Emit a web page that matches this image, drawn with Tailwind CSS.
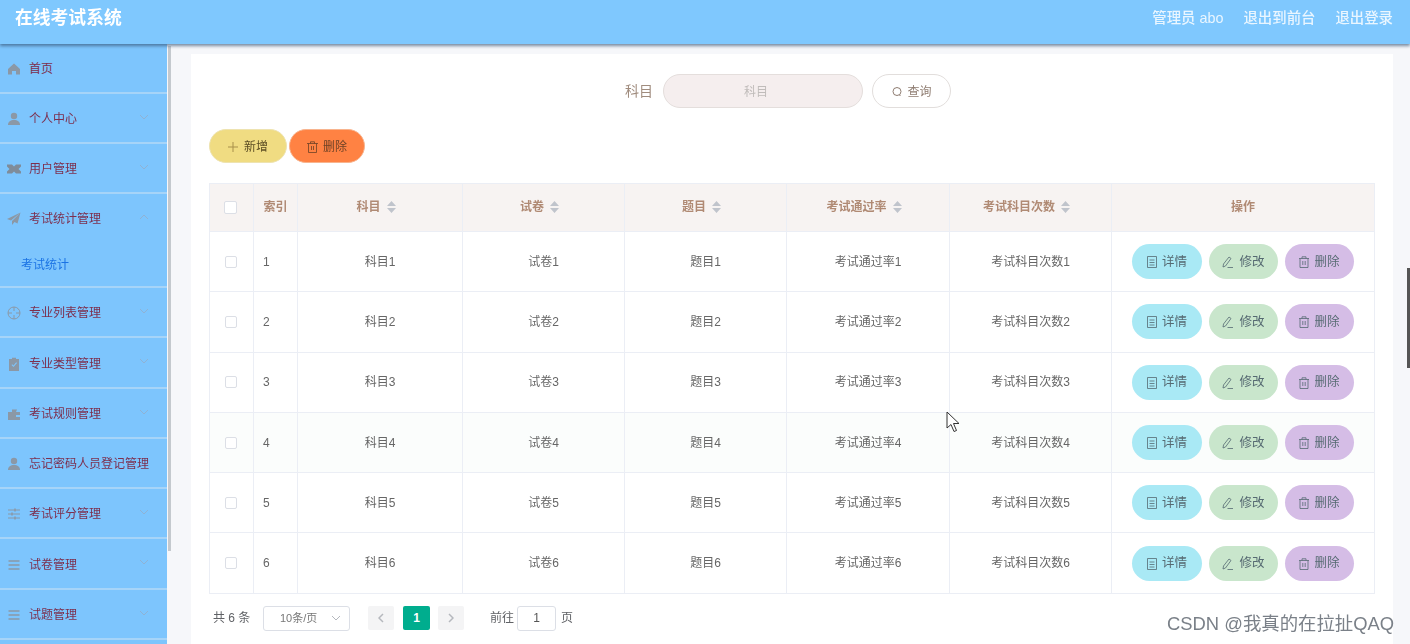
<!DOCTYPE html>
<html lang="zh"><head><meta charset="utf-8"><title>在线考试系统</title>
<script src="https://cdn.jsdelivr.net/npm/@tailwindcss/browser@4"></script></head>
<body class="m-0 overflow-hidden bg-[#f6f7fa]">
<div class="relative w-[1410px] h-[644px] overflow-hidden font-['Liberation_Sans','Noto_Sans_CJK_SC',sans-serif] blur-[0.35px]">
<header class="relative z-10 h-[44px] bg-[#7fc8fe] flex items-center justify-between pl-[15px] pr-[17px] shadow-[0_2px_3px_rgba(50,80,110,0.65)]">
  <h1 class="text-[17.8px] font-bold text-white leading-none -mt-[6px]">在线考试系统</h1>
  <div class="flex gap-[20px] text-[14.4px] text-[#eaf6ff] font-medium -mt-[6px]"><span>管理员 abo</span><span>退出到前台</span><span>退出登录</span></div>
</header>
<div class="flex h-[600px]">
  <aside class="w-[167px] shrink-0 bg-[#7dc5fd] text-[12px] text-[#7c2f4e]">
    <div class="h-[50px] flex items-center pl-[7px] gap-[8px] border-b-2 border-[#a6d4f8] pt-[1px]">
      <svg class="w-[14px] h-[14px] text-[#8b98a6]" viewBox="0 0 14 14" fill="currentColor"><path d="M7 1.5 1 7v5.5h4V9h4v3.5h4V7z"/></svg><span>首页</span></div>
    <div class="h-[50px] flex items-center pl-[7px] gap-[8px] border-b-2 border-[#a6d4f8] pt-[2px] relative">
      <svg class="w-[14px] h-[14px] text-[#8b98a6]" viewBox="0 0 14 14" fill="currentColor"><circle cx="7" cy="4" r="3.2"/><path d="M1 13c0-3.500 2.500-5 6-5s6 1.500 6 5z"/></svg><span>个人中心</span>
      <svg class="absolute right-[18px] top-[20px] w-[10px] h-[6px] text-[#8fb2d4]" viewBox="0 0 10 6" fill="none" stroke="currentColor"><path d="M1 1l4 4 4-4"/></svg></div>
    <div class="h-[50px] flex items-center pl-[7px] gap-[8px] border-b-2 border-[#a6d4f8] pt-[2px] relative">
      <svg class="w-[14px] h-[14px] text-[#7f8c9a]" viewBox="0 0 14 14" fill="currentColor"><path d="M0 2.500h5l2 2 2-2h5v2l-2.500 2.500L14 9.500v2H9l-2-2-2 2H0v-2L2.500 7 0 4.500z"/></svg><span>用户管理</span>
      <svg class="absolute right-[18px] top-[20px] w-[10px] h-[6px] text-[#8fb2d4]" viewBox="0 0 10 6" fill="none" stroke="currentColor"><path d="M1 1l4 4 4-4"/></svg></div>
    <div class="h-[94px] border-b-2 border-[#a6d4f8] relative">
      <div class="h-[50px] flex items-center pl-[7px] gap-[8px]">
      <svg class="w-[14px] h-[14px] text-[#8b98a6]" viewBox="0 0 14 14" fill="currentColor"><path d="M13.500.5 0 7l4 1.500zM13.500.5 5 9v4l2.500-3 3 1.500z"/></svg><span>考试统计管理</span></div>
      <svg class="absolute right-[18px] top-[20px] w-[10px] h-[6px] text-[#8fb2d4]" viewBox="0 0 10 6" fill="none" stroke="currentColor"><path d="M1 5l4-4 4 4"/></svg>
      <div class="pl-[21px] text-[#1a73e4] mt-[12px] leading-[18px]">考试统计</div></div>
    <div class="h-[50px] flex items-center pl-[7px] gap-[8px] border-b-2 border-[#a6d4f8] pt-[2px] relative">
      <svg class="w-[14px] h-[14px] text-[#8b98a6]" viewBox="0 0 14 14" fill="none" stroke="currentColor"><circle cx="7" cy="7" r="6"/><path d="M7 1v4M7 9v4M1 7h4M9 7h4"/></svg><span>专业列表管理</span>
      <svg class="absolute right-[18px] top-[20px] w-[10px] h-[6px] text-[#8fb2d4]" viewBox="0 0 10 6" fill="none" stroke="currentColor"><path d="M1 1l4 4 4-4"/></svg></div>
    <div class="h-[51px] flex items-center pl-[7px] gap-[8px] border-b-2 border-[#a6d4f8] pt-[2px] relative">
      <svg class="w-[14px] h-[14px] text-[#8b98a6]" viewBox="0 0 14 14" fill="currentColor"><path d="M2 2h3V.8h4V2h3v12H2zm2.500 6 2 2 3.500-4-.8-.7L6.500 8.600 5.200 7.300z"/></svg><span>专业类型管理</span>
      <svg class="absolute right-[18px] top-[20px] w-[10px] h-[6px] text-[#8fb2d4]" viewBox="0 0 10 6" fill="none" stroke="currentColor"><path d="M1 1l4 4 4-4"/></svg></div>
    <div class="h-[50px] flex items-center pl-[7px] gap-[8px] border-b-2 border-[#a6d4f8] pt-[2px] relative">
      <svg class="w-[14px] h-[14px] text-[#8b98a6]" viewBox="0 0 14 14" fill="currentColor"><path d="M1 5h4V2.500h5L9 5h4v8H1zm8 3v2h4V8z"/></svg><span>考试规则管理</span>
      <svg class="absolute right-[18px] top-[20px] w-[10px] h-[6px] text-[#8fb2d4]" viewBox="0 0 10 6" fill="none" stroke="currentColor"><path d="M1 1l4 4 4-4"/></svg></div>
    <div class="h-[50px] flex items-center pl-[7px] gap-[8px] border-b-2 border-[#a6d4f8] pt-[2px]">
      <svg class="w-[14px] h-[14px] text-[#8b98a6]" viewBox="0 0 14 14" fill="currentColor"><circle cx="7" cy="4" r="3.200"/><path d="M1 13c0-3.500 2.500-5 6-5s6 1.500 6 5z"/></svg><span class="whitespace-nowrap">忘记密码人员登记管理</span></div>
    <div class="h-[50px] flex items-center pl-[7px] gap-[8px] border-b-2 border-[#a6d4f8] pt-[2px] relative">
      <svg class="w-[14px] h-[14px] text-[#8b98a6]" viewBox="0 0 14 14" fill="none" stroke="currentColor"><path d="M1 3h12M1 7h12M1 11h12"/><path d="M8 1.500v3M5 5.500v3M8 9.500v3" stroke-width="1.500"/></svg><span>考试评分管理</span>
      <svg class="absolute right-[18px] top-[20px] w-[10px] h-[6px] text-[#8fb2d4]" viewBox="0 0 10 6" fill="none" stroke="currentColor"><path d="M1 1l4 4 4-4"/></svg></div>
    <div class="h-[51px] flex items-center pl-[7px] gap-[8px] border-b-2 border-[#a6d4f8] pt-[2px] relative">
      <svg class="w-[14px] h-[14px] text-[#8b98a6]" viewBox="0 0 14 14" fill="none" stroke="currentColor" stroke-width="1.500"><path d="M1.500 3h11M1.500 7h11M1.500 11h11"/></svg><span>试卷管理</span>
      <svg class="absolute right-[18px] top-[20px] w-[10px] h-[6px] text-[#8fb2d4]" viewBox="0 0 10 6" fill="none" stroke="currentColor"><path d="M1 1l4 4 4-4"/></svg></div>
    <div class="h-[50px] flex items-center pl-[7px] gap-[8px] border-b-2 border-[#a6d4f8] pt-[2px] relative">
      <svg class="w-[14px] h-[14px] text-[#8b98a6]" viewBox="0 0 14 14" fill="none" stroke="currentColor" stroke-width="1.500"><path d="M1.500 3h11M1.500 7h11M1.500 11h11"/></svg><span>试题管理</span>
      <svg class="absolute right-[18px] top-[20px] w-[10px] h-[6px] text-[#8fb2d4]" viewBox="0 0 10 6" fill="none" stroke="currentColor"><path d="M1 1l4 4 4-4"/></svg></div>
  </aside>
  <main class="flex-1 pl-[24px] pr-[17px] pt-[10px]">
    <div class="w-[1202px] h-[600px] bg-white px-[18px] pt-[20px] text-[12px]">
      <form class="h-[34px] flex items-center justify-center gap-[10px] pr-[8px]">
        <label class="text-[14px] text-[#a08c7e]">科目</label>
        <div class="w-[200px] h-[34px] pr-[14px] pt-[1px] rounded-full bg-[#f5eeee] border border-[#e4dedc] flex items-center justify-center text-[#c0bcba]">科目</div>
        <div class="-ml-[1px] w-[79px] h-[34px] pt-[1px] rounded-full bg-white border border-[#e2dedc] flex items-center justify-center gap-[4px] text-[#8f7d72]">
          <svg class="w-[12px] h-[12px]" viewBox="0 0 12 12" fill="none" stroke="currentColor"><circle cx="6" cy="5.500" r="4"/><path d="M8.500 9l1 1"/></svg>查询</div>
      </form>
      <div class="flex gap-[2px] mt-[21px] h-[34px]">
        <div class="w-[78px] pt-[1px] rounded-full bg-[#f0dc82] border border-[#eee3b0] flex items-center justify-center gap-[6px] text-[#5c4e24]">
          <svg class="w-[10px] h-[10px] text-[#a8904a]" viewBox="0 0 10 10" fill="none" stroke="currentColor"><path d="M5 0v10M0 5h10"/></svg>新增</div>
        <div class="w-[76px] pt-[1px] rounded-full bg-[#ff8243] border border-[#f8b48e] flex items-center justify-center gap-[5px] text-[#6e4226]">
          <svg class="w-[11px] h-[12px]" viewBox="0 0 11 12" fill="none" stroke="currentColor" stroke-width="0.800"><path d="M0 2.500h11M3.500 2.500V.8h4v1.700M1.500 2.500v9h8v-9M4.500 5v4M6.500 5v4"/></svg>删除</div>
      </div>
      <table class="mt-[20px] w-[1165px] table-fixed border-collapse text-[12px] text-[#666] border border-[#ebeef5]">
        <colgroup><col class="w-[44px]"><col class="w-[44px]"><col class="w-[165px]"><col class="w-[162px]"><col class="w-[162px]"><col class="w-[163px]"><col class="w-[162px]"><col class="w-[263px]"></colgroup>
        <thead><tr class="h-[48px] bg-[#f7f3f2] text-[#b08a74] font-bold">
          <th class="border border-[#ebeef5] pr-[2px]"><span class="block w-[13px] h-[13px] mx-auto bg-white border border-[#dcdfe6] rounded-[2px]"></span></th>
          <th class="border border-[#ebeef5] font-bold pb-[2px]">索引</th>
          <th class="border border-[#ebeef5] font-bold pr-[8px] pb-[2px]"><span class="inline-flex items-center gap-[6px]">科目<svg class="w-[9px] h-[12px] text-[#c0c4cc]" viewBox="0 0 9 12" fill="currentColor"><path d="M4.500 0 9 5H0zM0 7h9l-4.500 5z"/></svg></span></th>
          <th class="border border-[#ebeef5] font-bold pr-[8px] pb-[2px]"><span class="inline-flex items-center gap-[6px]">试卷<svg class="w-[9px] h-[12px] text-[#c0c4cc]" viewBox="0 0 9 12" fill="currentColor"><path d="M4.500 0 9 5H0zM0 7h9l-4.500 5z"/></svg></span></th>
          <th class="border border-[#ebeef5] font-bold pr-[8px] pb-[2px]"><span class="inline-flex items-center gap-[6px]">题目<svg class="w-[9px] h-[12px] text-[#c0c4cc]" viewBox="0 0 9 12" fill="currentColor"><path d="M4.500 0 9 5H0zM0 7h9l-4.500 5z"/></svg></span></th>
          <th class="border border-[#ebeef5] font-bold pr-[8px] pb-[2px]"><span class="inline-flex items-center gap-[6px]">考试通过率<svg class="w-[9px] h-[12px] text-[#c0c4cc]" viewBox="0 0 9 12" fill="currentColor"><path d="M4.500 0 9 5H0zM0 7h9l-4.500 5z"/></svg></span></th>
          <th class="border border-[#ebeef5] font-bold pr-[8px] pb-[2px]"><span class="inline-flex items-center gap-[6px]">考试科目次数<svg class="w-[9px] h-[12px] text-[#c0c4cc]" viewBox="0 0 9 12" fill="currentColor"><path d="M4.500 0 9 5H0zM0 7h9l-4.500 5z"/></svg></span></th>
          <th class="border border-[#ebeef5] font-bold pb-[2px]">操作</th>
        </tr></thead>
        <tbody class="text-center">
          <tr class="h-[60.3px]"><td class="border border-[#ebeef5] pr-[2px]"><span class="block w-[12px] h-[12px] mx-auto bg-white border border-[#dcdfe6] rounded-[2px]"></span></td><td class="border border-[#ebeef5] text-left pl-[9px]">1</td><td class="border border-[#ebeef5]">科目1</td><td class="border border-[#ebeef5]">试卷1</td><td class="border border-[#ebeef5]">题目1</td><td class="border border-[#ebeef5]">考试通过率1</td><td class="border border-[#ebeef5]">考试科目次数1</td>
            <td class="border border-[#ebeef5]"><div class="flex justify-center gap-[7px] text-[12.5px] text-[#566a72]"><span class="w-[70px] h-[35px] pt-[1px] rounded-full bg-[#a9e9f5] flex items-center justify-center gap-[5px]"><svg class="w-[10px] h-[12px]" viewBox="0 0 10 12" fill="none" stroke="currentColor" stroke-width="0.800"><path d="M.5.500h9v11h-9zM2.500 4h5M2.500 6.500h5M2.500 9h5"/></svg>详情</span><span class="w-[69px] h-[35px] pt-[1px] rounded-full bg-[#c9e6cc] flex items-center justify-center gap-[5px]"><svg class="w-[12px] h-[12px]" viewBox="0 0 12 12" fill="none" stroke="currentColor" stroke-width="0.800"><path d="M1.500 8 7 1l2 1.500L3.500 10l-2.500 1zM5.500 11.500H11"/></svg>修改</span><span class="w-[69px] h-[35px] pt-[1px] rounded-full bg-[#d5bde6] flex items-center justify-center gap-[5px]"><svg class="w-[10px] h-[12px]" viewBox="0 0 10 12" fill="none" stroke="currentColor" stroke-width="0.800"><path d="M0 2.500h10M3 2.500V.8h4v1.700M1 2.500v9h8v-9M3.800 5v4M6.200 5v4"/></svg>删除</span></div></td></tr>
          <tr class="h-[60.3px]"><td class="border border-[#ebeef5] pr-[2px]"><span class="block w-[12px] h-[12px] mx-auto bg-white border border-[#dcdfe6] rounded-[2px]"></span></td><td class="border border-[#ebeef5] text-left pl-[9px]">2</td><td class="border border-[#ebeef5]">科目2</td><td class="border border-[#ebeef5]">试卷2</td><td class="border border-[#ebeef5]">题目2</td><td class="border border-[#ebeef5]">考试通过率2</td><td class="border border-[#ebeef5]">考试科目次数2</td>
            <td class="border border-[#ebeef5]"><div class="flex justify-center gap-[7px] text-[12.5px] text-[#566a72]"><span class="w-[70px] h-[35px] pt-[1px] rounded-full bg-[#a9e9f5] flex items-center justify-center gap-[5px]"><svg class="w-[10px] h-[12px]" viewBox="0 0 10 12" fill="none" stroke="currentColor" stroke-width="0.800"><path d="M.5.500h9v11h-9zM2.500 4h5M2.500 6.500h5M2.500 9h5"/></svg>详情</span><span class="w-[69px] h-[35px] pt-[1px] rounded-full bg-[#c9e6cc] flex items-center justify-center gap-[5px]"><svg class="w-[12px] h-[12px]" viewBox="0 0 12 12" fill="none" stroke="currentColor" stroke-width="0.800"><path d="M1.500 8 7 1l2 1.500L3.500 10l-2.500 1zM5.500 11.500H11"/></svg>修改</span><span class="w-[69px] h-[35px] pt-[1px] rounded-full bg-[#d5bde6] flex items-center justify-center gap-[5px]"><svg class="w-[10px] h-[12px]" viewBox="0 0 10 12" fill="none" stroke="currentColor" stroke-width="0.800"><path d="M0 2.500h10M3 2.500V.8h4v1.700M1 2.500v9h8v-9M3.800 5v4M6.200 5v4"/></svg>删除</span></div></td></tr>
          <tr class="h-[60.3px]"><td class="border border-[#ebeef5] pr-[2px]"><span class="block w-[12px] h-[12px] mx-auto bg-white border border-[#dcdfe6] rounded-[2px]"></span></td><td class="border border-[#ebeef5] text-left pl-[9px]">3</td><td class="border border-[#ebeef5]">科目3</td><td class="border border-[#ebeef5]">试卷3</td><td class="border border-[#ebeef5]">题目3</td><td class="border border-[#ebeef5]">考试通过率3</td><td class="border border-[#ebeef5]">考试科目次数3</td>
            <td class="border border-[#ebeef5]"><div class="flex justify-center gap-[7px] text-[12.5px] text-[#566a72]"><span class="w-[70px] h-[35px] pt-[1px] rounded-full bg-[#a9e9f5] flex items-center justify-center gap-[5px]"><svg class="w-[10px] h-[12px]" viewBox="0 0 10 12" fill="none" stroke="currentColor" stroke-width="0.800"><path d="M.5.500h9v11h-9zM2.500 4h5M2.500 6.500h5M2.500 9h5"/></svg>详情</span><span class="w-[69px] h-[35px] pt-[1px] rounded-full bg-[#c9e6cc] flex items-center justify-center gap-[5px]"><svg class="w-[12px] h-[12px]" viewBox="0 0 12 12" fill="none" stroke="currentColor" stroke-width="0.800"><path d="M1.500 8 7 1l2 1.500L3.500 10l-2.500 1zM5.500 11.500H11"/></svg>修改</span><span class="w-[69px] h-[35px] pt-[1px] rounded-full bg-[#d5bde6] flex items-center justify-center gap-[5px]"><svg class="w-[10px] h-[12px]" viewBox="0 0 10 12" fill="none" stroke="currentColor" stroke-width="0.800"><path d="M0 2.500h10M3 2.500V.8h4v1.700M1 2.500v9h8v-9M3.800 5v4M6.200 5v4"/></svg>删除</span></div></td></tr>
          <tr class="h-[60.3px] bg-[#fbfdfc]"><td class="border border-[#ebeef5] pr-[2px]"><span class="block w-[12px] h-[12px] mx-auto bg-white border border-[#dcdfe6] rounded-[2px]"></span></td><td class="border border-[#ebeef5] text-left pl-[9px]">4</td><td class="border border-[#ebeef5]">科目4</td><td class="border border-[#ebeef5]">试卷4</td><td class="border border-[#ebeef5]">题目4</td><td class="border border-[#ebeef5]">考试通过率4</td><td class="border border-[#ebeef5]">考试科目次数4</td>
            <td class="border border-[#ebeef5]"><div class="flex justify-center gap-[7px] text-[12.5px] text-[#566a72]"><span class="w-[70px] h-[35px] pt-[1px] rounded-full bg-[#a9e9f5] flex items-center justify-center gap-[5px]"><svg class="w-[10px] h-[12px]" viewBox="0 0 10 12" fill="none" stroke="currentColor" stroke-width="0.800"><path d="M.5.500h9v11h-9zM2.500 4h5M2.500 6.500h5M2.500 9h5"/></svg>详情</span><span class="w-[69px] h-[35px] pt-[1px] rounded-full bg-[#c9e6cc] flex items-center justify-center gap-[5px]"><svg class="w-[12px] h-[12px]" viewBox="0 0 12 12" fill="none" stroke="currentColor" stroke-width="0.800"><path d="M1.500 8 7 1l2 1.500L3.500 10l-2.500 1zM5.500 11.500H11"/></svg>修改</span><span class="w-[69px] h-[35px] pt-[1px] rounded-full bg-[#d5bde6] flex items-center justify-center gap-[5px]"><svg class="w-[10px] h-[12px]" viewBox="0 0 10 12" fill="none" stroke="currentColor" stroke-width="0.800"><path d="M0 2.500h10M3 2.500V.8h4v1.700M1 2.500v9h8v-9M3.800 5v4M6.200 5v4"/></svg>删除</span></div></td></tr>
          <tr class="h-[60.3px]"><td class="border border-[#ebeef5] pr-[2px]"><span class="block w-[12px] h-[12px] mx-auto bg-white border border-[#dcdfe6] rounded-[2px]"></span></td><td class="border border-[#ebeef5] text-left pl-[9px]">5</td><td class="border border-[#ebeef5]">科目5</td><td class="border border-[#ebeef5]">试卷5</td><td class="border border-[#ebeef5]">题目5</td><td class="border border-[#ebeef5]">考试通过率5</td><td class="border border-[#ebeef5]">考试科目次数5</td>
            <td class="border border-[#ebeef5]"><div class="flex justify-center gap-[7px] text-[12.5px] text-[#566a72]"><span class="w-[70px] h-[35px] pt-[1px] rounded-full bg-[#a9e9f5] flex items-center justify-center gap-[5px]"><svg class="w-[10px] h-[12px]" viewBox="0 0 10 12" fill="none" stroke="currentColor" stroke-width="0.800"><path d="M.5.500h9v11h-9zM2.500 4h5M2.500 6.500h5M2.500 9h5"/></svg>详情</span><span class="w-[69px] h-[35px] pt-[1px] rounded-full bg-[#c9e6cc] flex items-center justify-center gap-[5px]"><svg class="w-[12px] h-[12px]" viewBox="0 0 12 12" fill="none" stroke="currentColor" stroke-width="0.800"><path d="M1.500 8 7 1l2 1.500L3.500 10l-2.500 1zM5.500 11.500H11"/></svg>修改</span><span class="w-[69px] h-[35px] pt-[1px] rounded-full bg-[#d5bde6] flex items-center justify-center gap-[5px]"><svg class="w-[10px] h-[12px]" viewBox="0 0 10 12" fill="none" stroke="currentColor" stroke-width="0.800"><path d="M0 2.500h10M3 2.500V.8h4v1.700M1 2.500v9h8v-9M3.800 5v4M6.200 5v4"/></svg>删除</span></div></td></tr>
          <tr class="h-[60.3px]"><td class="border border-[#ebeef5] pr-[2px]"><span class="block w-[12px] h-[12px] mx-auto bg-white border border-[#dcdfe6] rounded-[2px]"></span></td><td class="border border-[#ebeef5] text-left pl-[9px]">6</td><td class="border border-[#ebeef5]">科目6</td><td class="border border-[#ebeef5]">试卷6</td><td class="border border-[#ebeef5]">题目6</td><td class="border border-[#ebeef5]">考试通过率6</td><td class="border border-[#ebeef5]">考试科目次数6</td>
            <td class="border border-[#ebeef5]"><div class="flex justify-center gap-[7px] text-[12.5px] text-[#566a72]"><span class="w-[70px] h-[35px] pt-[1px] rounded-full bg-[#a9e9f5] flex items-center justify-center gap-[5px]"><svg class="w-[10px] h-[12px]" viewBox="0 0 10 12" fill="none" stroke="currentColor" stroke-width="0.800"><path d="M.5.500h9v11h-9zM2.500 4h5M2.500 6.500h5M2.500 9h5"/></svg>详情</span><span class="w-[69px] h-[35px] pt-[1px] rounded-full bg-[#c9e6cc] flex items-center justify-center gap-[5px]"><svg class="w-[12px] h-[12px]" viewBox="0 0 12 12" fill="none" stroke="currentColor" stroke-width="0.800"><path d="M1.500 8 7 1l2 1.500L3.500 10l-2.500 1zM5.500 11.500H11"/></svg>修改</span><span class="w-[69px] h-[35px] pt-[1px] rounded-full bg-[#d5bde6] flex items-center justify-center gap-[5px]"><svg class="w-[10px] h-[12px]" viewBox="0 0 10 12" fill="none" stroke="currentColor" stroke-width="0.800"><path d="M0 2.500h10M3 2.500V.8h4v1.700M1 2.500v9h8v-9M3.800 5v4M6.200 5v4"/></svg>删除</span></div></td></tr>
        </tbody>
      </table>
      <nav class="mt-[12px] flex items-center h-[25px] text-[#606266] text-[12px] pl-[4px]">
        <span class="w-[50px]">共 6 条</span>
        <div class="w-[87px] h-[25px] border border-[#dcdfe6] rounded-[3px] flex items-center justify-between pl-[16px] pr-[8px] text-[#777] text-[11px]">10条/页<svg class="w-[10px] h-[6px] text-[#b5b8be]" viewBox="0 0 10 6" fill="none" stroke="currentColor"><path d="M1 1l4 4 4-4"/></svg></div>
        <div class="ml-[18px] w-[26px] h-[24px] bg-[#f4f4f5] rounded-[2px] flex items-center justify-center"><svg class="w-[6px] h-[10px] text-[#b5b8be]" viewBox="0 0 6 10" fill="none" stroke="currentColor" stroke-width="1.500"><path d="M5 1 1 5l4 4"/></svg></div>
        <div class="ml-[9px] w-[27px] h-[24px] bg-[#00ad8e] rounded-[2px] flex items-center justify-center text-white font-bold">1</div>
        <div class="ml-[8px] w-[26px] h-[24px] bg-[#f4f4f5] rounded-[2px] flex items-center justify-center"><svg class="w-[6px] h-[10px] text-[#b5b8be]" viewBox="0 0 6 10" fill="none" stroke="currentColor" stroke-width="1.500"><path d="m1 1 4 4-4 4"/></svg></div>
        <span class="ml-[26px]">前往</span>
        <div class="ml-[3px] w-[39px] h-[25px] border border-[#dcdfe6] rounded-[3px] flex items-center justify-center text-[#555]">1</div>
        <span class="ml-[5px]">页</span>
      </nav>
    </div>
  </main>
</div>
<div class="absolute left-[168px] top-[46px] w-[3px] h-[505px] bg-[#c4c9ce]"></div>
<div class="absolute right-0 top-[268px] w-[3px] h-[100px] bg-[#555]"></div>
<svg class="absolute left-[946px] top-[411px] w-[15px] h-[22px]" viewBox="0 0 15 22"><path d="M1 1v16l4-3.500 3 7 2.500-1-3-7H13z" fill="#fff" stroke="#333"/></svg>
<div class="absolute left-[1167px] top-[612px] text-[18.4px] leading-[24px] text-[#7a8088] whitespace-nowrap">CSDN @我真的在拉扯QAQ</div>
</div>
</body></html>
